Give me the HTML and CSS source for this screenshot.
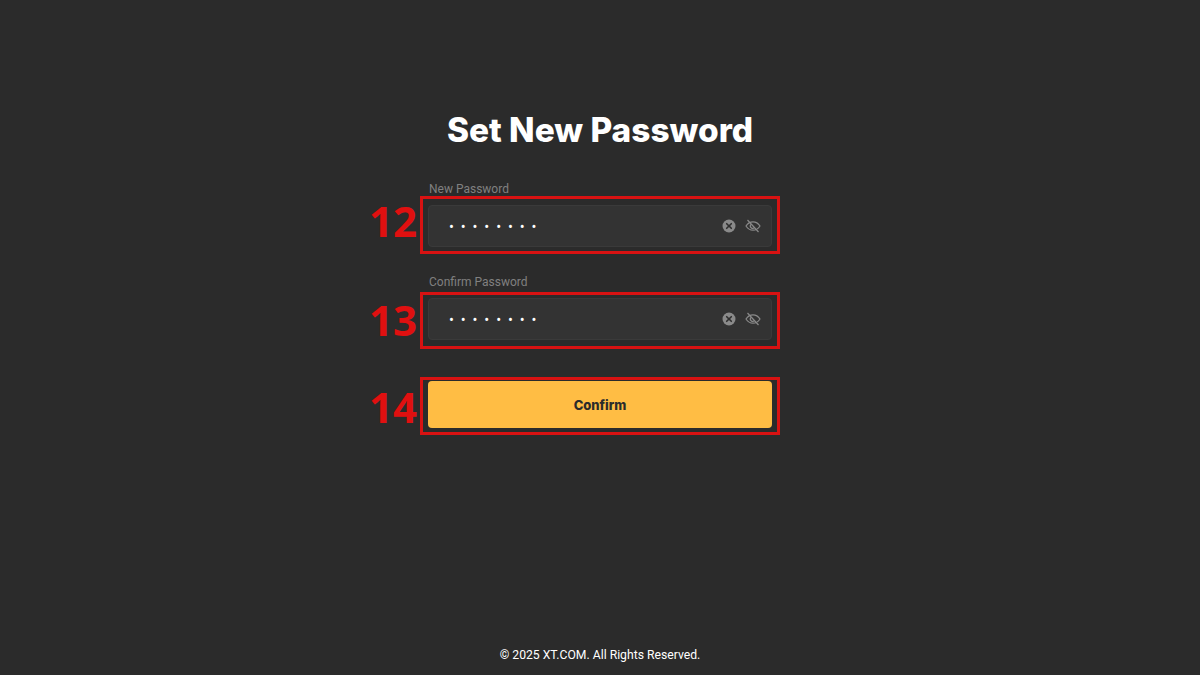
FILE: index.html
```html
<!DOCTYPE html>
<html lang="en">
<head>
  <meta charset="UTF-8" />
  <title>Set New Password</title>
  <link rel="stylesheet" href="styles.css">
</head>
<body>
  <main class="panel">
    <h1>Set New Password</h1>

    <div class="field field-first">
      <label>New Password</label>
      <div class="input-box">
        <span class="dots">••••••••</span>
        <svg class="icon" width="14" height="14" viewBox="0 0 14 14"><circle cx="7" cy="7" r="6.5" fill="#8a8a8a"/><path d="M4.7 4.7l4.6 4.6M9.3 4.7l-4.6 4.6" stroke="#2e2e2e" stroke-width="1.6" stroke-linecap="round"/></svg>
        <svg class="icon" width="16" height="14" viewBox="0 0 16 14" fill="none" stroke="#8a8a8a" stroke-width="1.2"><path d="M1 7c1.8-2.8 4.2-4.2 7-4.2s5.2 1.4 7 4.2c-1.8 2.8-4.2 4.2-7 4.2S2.8 9.8 1 7z"/><path d="M6 5.4a2.2 2.2 0 0 0 3.4 3.2"/><path d="M2.5 1l11 12"/></svg>
      </div>
      <div class="mark"></div>
      <span class="mark-num">12</span>
    </div>

    <div class="field field-second">
      <label>Confirm Password</label>
      <div class="input-box">
        <span class="dots">••••••••</span>
        <svg class="icon" width="14" height="14" viewBox="0 0 14 14"><circle cx="7" cy="7" r="6.5" fill="#8a8a8a"/><path d="M4.7 4.7l4.6 4.6M9.3 4.7l-4.6 4.6" stroke="#2e2e2e" stroke-width="1.6" stroke-linecap="round"/></svg>
        <svg class="icon" width="16" height="14" viewBox="0 0 16 14" fill="none" stroke="#8a8a8a" stroke-width="1.2"><path d="M1 7c1.8-2.8 4.2-4.2 7-4.2s5.2 1.4 7 4.2c-1.8 2.8-4.2 4.2-7 4.2S2.8 9.8 1 7z"/><path d="M6 5.4a2.2 2.2 0 0 0 3.4 3.2"/><path d="M2.5 1l11 12"/></svg>
      </div>
      <div class="mark"></div>
      <span class="mark-num">13</span>
    </div>

    <div class="field field-btn">
      <button class="btn-confirm">Confirm</button>
      <div class="mark"></div>
      <span class="mark-num">14</span>
    </div>
  </main>

  <footer>© 2025 XT.COM. All Rights Reserved.</footer>
</body>
</html>
```

FILE: styles.css
```css
* {
  box-sizing: border-box;
}
body {
  margin: 0;
  height: 100vh;
  overflow: hidden;
  background: #2b2b2b;
  font-family: Roboto, Arial, sans-serif;
  display: flex;
  flex-direction: column;
  align-items: center;
}
.panel {
  width: 344px;
  flex: 1;
  padding-top: 108px;
}
h1 {
  margin: 0 -20px 26px;
  height: 44px;
  line-height: 44px;
  font-family: Inter, sans-serif;
  font-size: 33.4px;
  font-weight: 800;
  color: #ffffff;
  text-align: center;
}
.field {
  position: relative;
  margin-bottom: 24px;
}
.field label {
  display: block;
  height: 20px;
  line-height: 22px;
  padding-left: 1px;
  font-size: 12px;
  color: #808080;
  margin-bottom: 7px;
}
.input-box {
  height: 42px;
  display: flex;
  align-items: center;
  gap: 9px;
  padding: 0 10px 0 20px;
  background: #333333;
  border: 1px solid #3a3a3a;
  border-radius: 4px;
}
.dots {
  flex: 1;
  color: #ffffff;
  font-family: "Noto Sans", sans-serif;
  font-size: 13px;
  letter-spacing: 6.9px;
}
.btn-confirm {
  display: block;
  width: 100%;
  height: 47px;
  border: none;
  border-radius: 4px;
  background: #ffbd44;
  color: #2b2b2b;
  font-family: Inter, sans-serif;
  font-size: 13px;
  font-weight: 800;
}
.field-btn {
  margin-top: 41px;
}
/* red annotation boxes and numbers */
.mark {
  position: absolute;
  left: -8px;
  right: -8px;
  bottom: -7px;
  height: 58px;
  border: 3px solid #d81212;
  pointer-events: none;
}
.field-second .mark {
  height: 57px;
  bottom: -9px;
}
.field-btn .mark {
  top: -4px;
  bottom: -7px;
  height: auto;
}
.mark-num {
  position: absolute;
  right: 355px;
  bottom: -5px;
  font-family: "Open Sans", sans-serif;
  font-size: 42px;
  line-height: 50px;
  font-weight: 700;
  color: #e01010;
}
.field-first .mark-num {
  bottom: 1px;
}
.field-btn .mark-num {
  bottom: -4px;
}
footer {
  height: 42px;
  padding-top: 15px;
  font-size: 12.2px;
  color: #ffffff;
}
```
